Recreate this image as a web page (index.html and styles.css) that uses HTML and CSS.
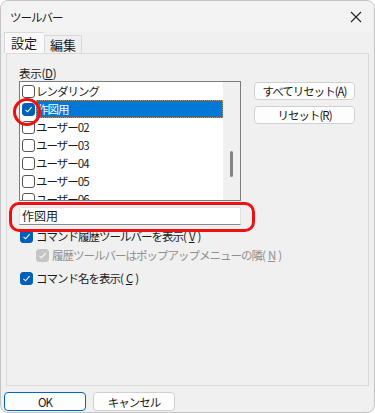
FILE: index.html
```html
<!DOCTYPE html>
<html lang="ja">
<head>
    <meta charset="UTF-8">
    <title>ツールバー</title>
    <link rel="stylesheet" href="styles.css">
</head>
<body>
    <div class="window">
        <div class="titlebar">
            <span class="title">ツールバー</span>
            <svg class="close" width="12" height="12" viewBox="0 0 12 12">
                <path d="M1 1 L11 11 M11 1 L1 11" stroke="#222" stroke-width="1.1" fill="none"/>
            </svg>
        </div>

        <div class="tabs">
            <div class="tab active">設定</div>
            <div class="tab">編集</div>
        </div>

        <div class="panel">
            <div class="label">表示(<u>D</u>)</div>
            <div class="list-row">
                <div class="listbox">
                    <div class="items">
                        <div class="item"><span class="box"></span>レンダリング</div>
                        <div class="item selected"><span class="box checked"><svg width="9" height="9" viewBox="0 0 9 9"><path d="M1.5 4.8 L3.6 6.8 L7.6 2.2" stroke="#fff" stroke-width="1.1" fill="none"/></svg></span><span class="sel-text">作図用</span></div>
                        <div class="item"><span class="box"></span>ユーザー02</div>
                        <div class="item"><span class="box"></span>ユーザー03</div>
                        <div class="item"><span class="box"></span>ユーザー04</div>
                        <div class="item"><span class="box"></span>ユーザー05</div>
                        <div class="item"><span class="box"></span>ユーザー06</div>
                    </div>
                    <div class="scrollbar"><div class="thumb"></div></div>
                </div>
                <div class="side-buttons">
                    <button class="btn" type="button">すべてリセット(A)</button>
                    <button class="btn" type="button">リセット(R)</button>
                </div>
            </div>
            <div class="textbox">作図用</div>

            <div class="option">
                <span class="box checked"><svg width="9" height="9" viewBox="0 0 9 9"><path d="M1.5 4.8 L3.6 6.8 L7.6 2.2" stroke="#fff" stroke-width="1.1" fill="none"/></svg></span>
                コマンド履歴ツールバーを表示(<u>V</u>)
            </div>
            <div class="option sub disabled">
                <span class="box checked"><svg width="9" height="9" viewBox="0 0 9 9"><path d="M1.5 4.8 L3.6 6.8 L7.6 2.2" stroke="#fff" stroke-width="1.1" fill="none"/></svg></span>
                履歴ツールバーはポップアップメニューの隣(<u>N</u>)
            </div>
            <div class="option spaced">
                <span class="box checked"><svg width="9" height="9" viewBox="0 0 9 9"><path d="M1.5 4.8 L3.6 6.8 L7.6 2.2" stroke="#fff" stroke-width="1.1" fill="none"/></svg></span>
                コマンド名を表示(<u>C</u>)
            </div>

            <!-- annotations -->
            <div class="mark-circle"></div>
            <div class="mark-rect"></div>
        </div>

        <div class="footer">
            <button class="btn ok" type="button">OK</button>
            <button class="btn" type="button">キャンセル</button>
        </div>
    </div>
</body>
</html>
```

FILE: styles.css
```css
* {
    box-sizing: border-box;
}

body {
    margin: 0;
    background: #ffffff;
    font-family: "Noto Sans CJK JP", "Noto Sans", sans-serif;
    font-size: 11.5px;
    letter-spacing: -1px;
    color: #1a1a1a;
}

.window {
    width: 375px;
    height: 413px;
    background: #f0f0f0;
    border: 1px solid #c4c4c4;
    border-radius: 8px;
    overflow: hidden;
    display: flex;
    flex-direction: column;
}

.titlebar {
    height: 31px;
    display: flex;
    align-items: center;
    justify-content: space-between;
    padding: 0 10px 0 9px;
    background: #f3f3f3;
}

.title {
    font-size: 11.5px;
}

.close {
    margin-right: 2px;
}

.tabs {
    display: flex;
    align-items: flex-end;
    height: 21px;
    padding-left: 3px;
    letter-spacing: 0;
}

.tab {
    height: 18px;
    padding: 0 5px;
    border: 1px solid #d9d9d9;
    border-bottom: none;
    background: #f0f0f0;
    font-size: 13px;
    line-height: 17px;
}

.tab.active {
    height: 21px;
    padding: 0 7px 0 6px;
    background: #f9f9f9;
    border-right: none;
    line-height: 19px;
}

.panel {
    position: relative;
    height: 333px;
    margin: 0 5px;
    border: 1px solid #dadada;
    padding: 11px 12px 0 12px;
}

.label {
    height: 16px;
    line-height: 16px;
    letter-spacing: -0.3px;
}

u {
    text-decoration: underline;
}

.list-row {
    display: flex;
    align-items: flex-start;
}

.listbox {
    width: 222px;
    height: 120px;
    border: 1px solid #7c7c7c;
    background: #ffffff;
    display: flex;
    overflow: hidden;
}

.items {
    flex: 1;
}

.item {
    height: 18px;
    display: flex;
    align-items: center;
    padding-left: 2px;
    line-height: 18px;
    white-space: nowrap;
}

.box {
    width: 13px;
    height: 13px;
    border: 1px solid #555555;
    border-radius: 3px;
    background: #ffffff;
    margin-right: 1px;
    flex: none;
    display: flex;
    align-items: center;
    justify-content: center;
}

.box.checked {
    background: #005fb8;
    border-color: #005fb8;
}

.item.selected .sel-text {
    flex: 1;
    align-self: stretch;
    background: #0078d7;
    color: #ffffff;
    outline: 1px dotted #e08a2c;
    outline-offset: -1px;
    padding-left: 1px;
}

.scrollbar {
    width: 17px;
    background: #f0f0f0;
    position: relative;
}

.thumb {
    position: absolute;
    left: 7px;
    top: 69px;
    width: 3px;
    height: 26px;
    background: #858585;
    border-radius: 2px;
}

.side-buttons {
    margin-left: 13px;
    padding-top: 1px;
    display: flex;
    flex-direction: column;
    gap: 6px;
}

.btn {
    width: 101px;
    height: 18px;
    padding: 0;
    border: 1px solid #d0d0d0;
    border-radius: 4px;
    background: #fdfdfd;
    font-family: "Noto Sans CJK JP", "Noto Sans", sans-serif;
    font-size: 11.5px;
    letter-spacing: -1px;
    line-height: 16px;
    color: #1a1a1a;
}

.textbox {
    width: 222px;
    height: 18px;
    margin-top: 6px;
    background: #ffffff;
    border: 1px solid #e2e2e2;
    border-bottom-color: #8a8a8a;
    padding-left: 2px;
    line-height: 16px;
    font-size: 12px;
    letter-spacing: 0;
}

.option {
    height: 18px;
    display: flex;
    align-items: center;
    gap: 3px;
    margin-top: 2px;
    padding-left: 1px;
    white-space: nowrap;
}

.option .box {
    margin-right: 0;
}

.option.sub {
    padding-left: 17px;
    margin-top: 1px;
}

.option.disabled {
    color: #8f8f8f;
}

.option.disabled .box {
    background: #c5c5c5;
    border-color: #c5c5c5;
}

.option.spaced {
    margin-top: 5px;
}

.mark-circle {
    position: absolute;
    left: 6px;
    top: 44px;
    width: 28px;
    height: 28px;
    border: 3px solid #ee1111;
    border-radius: 50%;
}

.mark-rect {
    position: absolute;
    left: 2px;
    top: 148px;
    width: 246px;
    height: 30px;
    border: 3px solid #ee1111;
    border-radius: 10px;
}

.footer {
    display: flex;
    gap: 7px;
    padding: 6px 0 0 3px;
}

.footer .btn {
    width: 82px;
    height: 19px;
}

.btn.ok {
    border: 1px solid #0067c0;
}
```
